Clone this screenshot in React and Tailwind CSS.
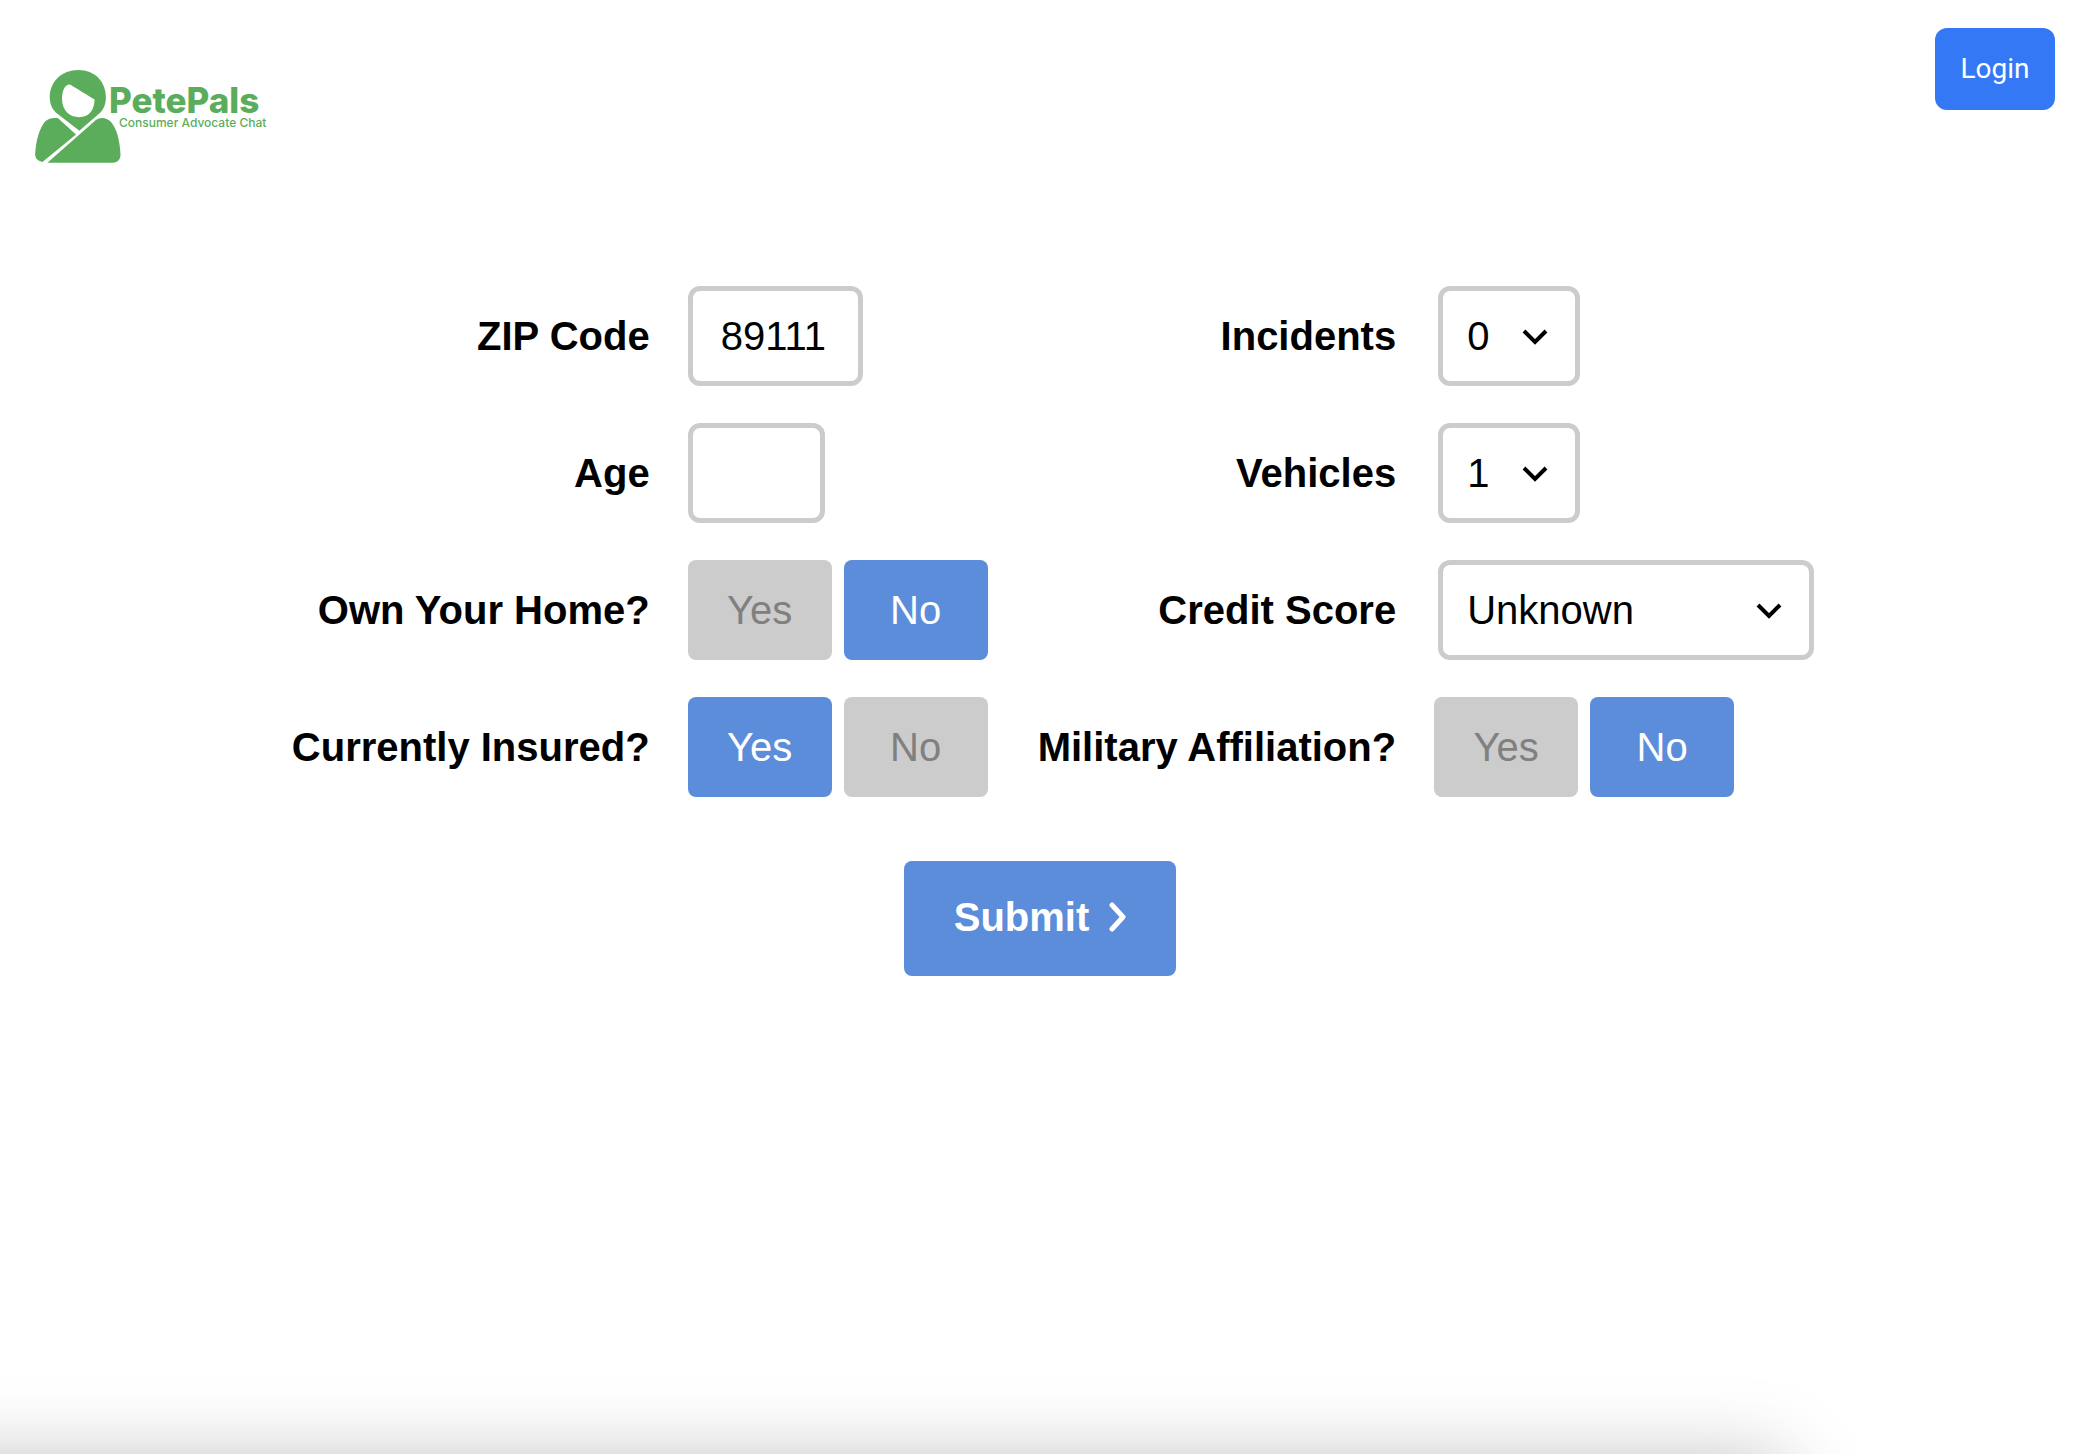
import { useState } from "react";

function Logo() {
  return (
    <a href="#" className="flex items-start text-[#5bad5b]" aria-label="PetePals home">
      <svg viewBox="45 60 258 280" className="h-[93px] w-[86px] shrink-0" fill="currentColor" aria-hidden="true">
        <path
          fillRule="evenodd"
          d="M178 243 L112 192 C96 179 89 162 89 142 C89 95 125 60 175 60 C225 60 258 95 258 142 C258 163 251 180 238 191 Z M146 104 C132 108 126 126 126 148 C126 180 147 202 178 202 C206 202 223 182 224 149 C200 133 172 118 153 105 Q150 103 146 104 Z"
        />
        <path d="M114 205 L168 254 L67 337 C54 335 45 327 45 314 C47 271 58 236 75 215 C85 205 98 203 114 205 Z" />
        <path d="M82 339 L227 211 C237 203 250 203 262 208 C290 222 300 275 302 315 C302 330 292 339 278 339 Z" />
      </svg>
      <span className="-ml-3 flex flex-col pt-3.5">
        <span className="font-['Inter',sans-serif] text-[35px] leading-8 font-extrabold">PetePals</span>
        <span className="pl-2.5 font-['Inter',sans-serif] text-[12px] leading-[14px] font-medium">Consumer Advocate Chat</span>
      </span>
    </a>
  );
}

function Label({ htmlFor, id, children }) {
  const style = "text-right font-bold whitespace-nowrap";
  return htmlFor ? (
    <label htmlFor={htmlFor} className={style}>{children}</label>
  ) : (
    <span id={id} className={style}>{children}</span>
  );
}

function SelectBox({ id, options, width }) {
  return (
    <div className={`relative ml-1 ${width}`}>
      <select
        id={id}
        className="h-[100px] w-full appearance-none rounded-xl border-5 border-[#ccc] bg-white pr-16 pl-6"
      >
        {options.map((o) => (
          <option key={o}>{o}</option>
        ))}
      </select>
      <svg
        viewBox="0 0 26 16"
        className="pointer-events-none absolute top-[43px] right-8 h-4 w-[26px]"
        fill="none"
        stroke="#000"
        strokeWidth="4"
        aria-hidden="true"
      >
        <path d="M2 2 L13 13 L24 2" />
      </svg>
    </div>
  );
}

function YesNo({ labelId, initial }) {
  const [value, setValue] = useState(initial);
  return (
    <div role="group" aria-labelledby={labelId} className="flex gap-3">
      {["Yes", "No"].map((v) => (
        <button
          key={v}
          type="button"
          aria-pressed={value === v}
          onClick={() => setValue(v)}
          className={`h-[100px] w-36 rounded-lg ${
            value === v ? "bg-[#5c8ddb] text-white" : "bg-[#ccc] text-[#808080]"
          }`}
        >
          {v}
        </button>
      ))}
    </div>
  );
}

export default function App() {
  return (
    <div className="relative min-h-screen overflow-hidden bg-white font-['Liberation_Sans',Arial,sans-serif] text-black">
      <header className="flex items-start justify-between pt-7 pr-[25px] pl-[35px]">
        <div className="pt-[42px]">
          <Logo />
        </div>
        <button type="button" className="h-[82px] w-[120px] rounded-xl bg-[#3478f6] font-['Roboto',sans-serif] text-[28px] text-white">
          Login
        </button>
      </header>

      <form className="mt-[123px] flex flex-col items-center text-[40px] leading-[46px]" onSubmit={(e) => e.preventDefault()}>
        <div className="grid grid-cols-[auto_312px_auto_auto] items-center gap-x-[38px] gap-y-[37px] pl-[26px]">
          <Label htmlFor="zip">ZIP Code</Label>
          <input id="zip" defaultValue="89111" className="h-[100px] w-[175px] rounded-xl border-5 border-[#ccc] px-7" />
          <Label htmlFor="incidents">Incidents</Label>
          <SelectBox id="incidents" width="w-[142px]" options={["0", "1", "2", "3"]} />

          <Label htmlFor="age">Age</Label>
          <input id="age" className="h-[100px] w-[137px] rounded-xl border-5 border-[#ccc] px-7" />
          <Label htmlFor="vehicles">Vehicles</Label>
          <SelectBox id="vehicles" width="w-[142px]" options={["1", "2", "3", "4"]} />

          <Label id="own-home">Own Your Home?</Label>
          <YesNo labelId="own-home" initial="No" />
          <Label htmlFor="credit">Credit Score</Label>
          <SelectBox id="credit" width="w-[376px]" options={["Unknown", "Excellent", "Good", "Fair", "Poor"]} />

          <Label id="insured">Currently Insured?</Label>
          <YesNo labelId="insured" initial="Yes" />
          <Label id="military">Military Affiliation?</Label>
          <YesNo labelId="military" initial="No" />
        </div>

        <button
          type="submit"
          className="mt-16 flex h-[115px] w-[272px] items-center justify-center gap-5 rounded-lg bg-[#5c8ddb] pb-1 font-bold text-white"
        >
          Submit
          <svg viewBox="0 0 17 30" className="h-[30px] w-[17px]" fill="none" stroke="currentColor" strokeWidth="5" strokeLinecap="round" strokeLinejoin="round" aria-hidden="true">
            <path d="M3 3 L14 15 L3 27" />
          </svg>
        </button>
      </form>

      <div className="absolute top-full right-[295px] -left-40 mt-[9px] h-96 shadow-[0_0_76px_rgba(0,0,0,0.27)]" aria-hidden="true" />
    </div>
  );
}
